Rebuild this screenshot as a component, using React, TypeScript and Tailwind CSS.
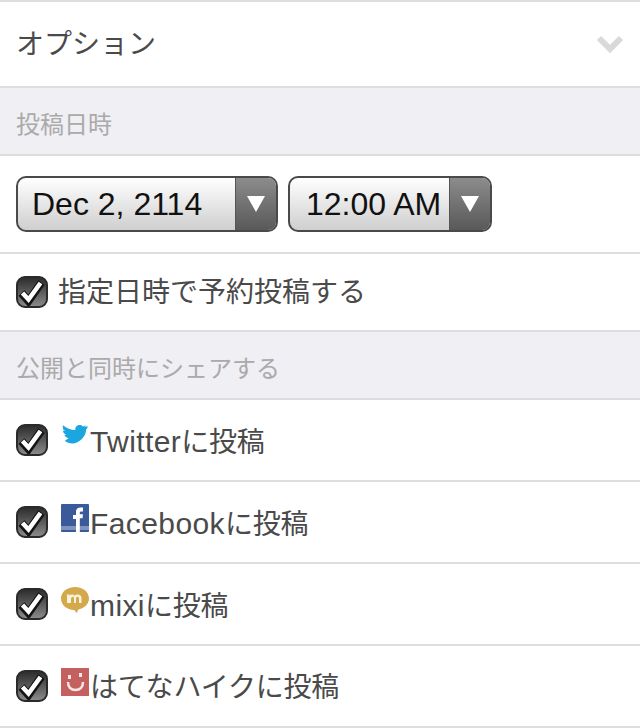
const font = { fontFamily: '"Liberation Sans", "Noto Sans CJK JP", sans-serif' };

function Check() {
  return (
    <span className="flex h-[32px] w-[32px] shrink-0 items-center justify-center rounded-[9px] border-2 border-[#2a2a2a] bg-gradient-to-b from-[#2e2e2e] to-[#8a8a8a]">
      <svg viewBox="0 0 28 28" className="h-[28px] w-[28px]">
        <path d="M3.500 15 L10.500 23 L23.500 4.500" fill="none" stroke="#141414" strokeWidth="8" strokeLinejoin="miter" />
        <path d="M4.500 15 L10.500 21.500 L22.500 5" fill="none" stroke="#fff" strokeWidth="4.500" />
      </svg>
    </span>
  );
}

function Arrow() {
  return (
    <span className="flex h-full w-[41px] shrink-0 items-center justify-center border-l border-[#555] bg-gradient-to-b from-[#8c8c8c] to-[#595959]">
      <svg viewBox="0 0 18 16" className="h-[16px] w-[18px]">
        <path d="M0 0 H18 L9 16 Z" fill="#fff" />
      </svg>
    </span>
  );
}

function Select({ text, width, pad }: { text: string; width: string; pad: string }) {
  return (
    <div className={`${width} flex h-[56px] items-center overflow-hidden rounded-[10px] border-2 border-[#4a4a4a] bg-gradient-to-b from-white to-[#cfcfcf]`}>
      <span className={`${pad} flex-1 whitespace-nowrap text-[32px] leading-none text-[#111]`}>{text}</span>
      <Arrow />
    </div>
  );
}

function Twitter() {
  return (
    <svg viewBox="1 0 27 20" className="h-[20px] w-[26px]">
      <path
        d="M27.500 1.500c-1 .8-2.200 1.300-3.400 1.600.9-.6 1.400-1.200 1.800-2.200-1 .6-2 .9-3.300 1.300C21.600 1 20.200.5 18.800.7c-2.700.3-4.400 2.600-3.900 5.200C10 5.700 6 3.600 2 .8c-.6 2.500-.2 4.700 2.200 6.100-.8 0-1.500-.2-2.200-.6 0 2.200 1.500 4 3.700 4.600-.7.2-1.400.2-2.100.1.6 1.700 2.200 3 4.200 3.100-1 .8-2.200 2-4 3 2.300 2 5 2.800 7.800 2.800 7.400 0 14.700-7.600 14.400-14.500 1-.7 1.500-1.600 1.500-3.900z"
        fill="#1ba6e0"
      />
    </svg>
  );
}

function Facebook() {
  return (
    <svg viewBox="0 0 28 28" className="h-[28px] w-[28px]">
      <rect width="28" height="28" rx="1" fill="#3b5a9a" />
      <rect y="22" width="28" height="4" fill="#7f93bd" />
      <path d="M15 28V15h-3v-4h3V8c0-3 1.800-4.500 4.400-4.500H22v4h-1.700c-1.100 0-1.500.5-1.500 1.500v1.200H22l-.5 4h-2.700V28z" fill="#fff" />
    </svg>
  );
}

function Mixi() {
  return (
    <svg viewBox="0 0 30 28" className="h-[28px] w-[30px]">
      <path d="M15 1C7 1 1 6 1 12.500S7 24 14 24l3 3 1-3.300C24 22.500 29 18 29 12.500 29 6 23 1 15 1z" fill="#d4a94c" />
      <path d="M7 17V8.500h2.500v1.200c1.200-1.600 4-1.600 5 0 1.500-1.800 7-1.800 7 2.300v5h-2.500v-4.500c0-2.200-3-2.200-3 0V17H14v-4.500c0-2.200-2.500-2.200-3 0V17z" fill="#fbf3dc" />
    </svg>
  );
}

function Hatena() {
  return (
    <svg viewBox="0 0 28 28" className="h-[28px] w-[28px]">
      <rect width="28" height="28" fill="#c4605f" />
      <rect x="7" y="7" width="3" height="4" fill="#fbe9e7" />
      <rect x="18" y="5" width="3" height="4" fill="#fbe9e7" />
      <path d="M7 14c0 5 3 8 7.500 8S22 19 22 14" fill="none" stroke="#fbe9e7" strokeWidth="2.500" />
    </svg>
  );
}

function Share({ icon, latin, label, top }: { icon: React.ReactNode; latin?: string; label: string; top: string }) {
  return (
    <div className="flex h-[82px] items-center border-b-2 border-[#ddd] pl-4">
      <Check />
      <span className={`${top} ml-[12px] flex w-[30px] shrink-0 justify-center`}>{icon}</span>
      <span className="pt-[4px] text-[28px] leading-none tracking-[-0.2px] text-[#4a4a4a]">
        {latin && <span className="text-[30px] tracking-[0.4px]">{latin}</span>}
        {label}
      </span>
    </div>
  );
}

function Heading({ text }: { text: string }) {
  return (
    <div className="flex h-[68px] items-center border-b-2 border-[#ddd] bg-[#efeff4] pl-4 pt-[8px]">
      <span className="text-[24px] leading-none text-[#aaa]">{text}</span>
    </div>
  );
}

export default function App() {
  return (
    <div style={font} className="h-[728px] w-[640px] overflow-hidden border-t-2 border-[#ddd] bg-white">
      <div className="flex h-[86px] items-center justify-between border-b-2 border-[#ddd] px-4">
        <span className="pt-[2px] text-[28px] leading-none text-[#4a4a4a]">オプション</span>
        <svg viewBox="0 0 28 18" className="h-[18px] w-[28px]">
          <path d="M3 3 L14 14 L25 3" fill="none" stroke="#d9d9d9" strokeWidth="6" />
        </svg>
      </div>
      <Heading text="投稿日時" />
      <div className="flex h-[98px] items-center gap-[10px] border-b-2 border-[#ddd] pl-4">
        <Select text="Dec 2, 2114" width="w-[262px]" pad="pl-[14px]" />
        <Select text="12:00 AM" width="w-[204px]" pad="pl-[16px]" />
      </div>
      <div className="flex h-[78px] items-center gap-[10px] border-b-2 border-[#ddd] pl-4">
        <Check />
        <span className="pt-[2px] text-[28px] leading-none text-[#4a4a4a]">指定日時で予約投稿する</span>
      </div>
      <Heading text="公開と同時にシェアする" />
      <Share icon={<Twitter />} latin="Twitter" label="に投稿" top="-translate-y-[6px]" />
      <Share icon={<Facebook />} latin="Facebook" label="に投稿" top="-translate-y-[4px]" />
      <Share icon={<Mixi />} latin="mixi" label="に投稿" top="-translate-y-[4px]" />
      <Share icon={<Hatena />} label="はてなハイクに投稿" top="-translate-y-[4px]" />
    </div>
  );
}
